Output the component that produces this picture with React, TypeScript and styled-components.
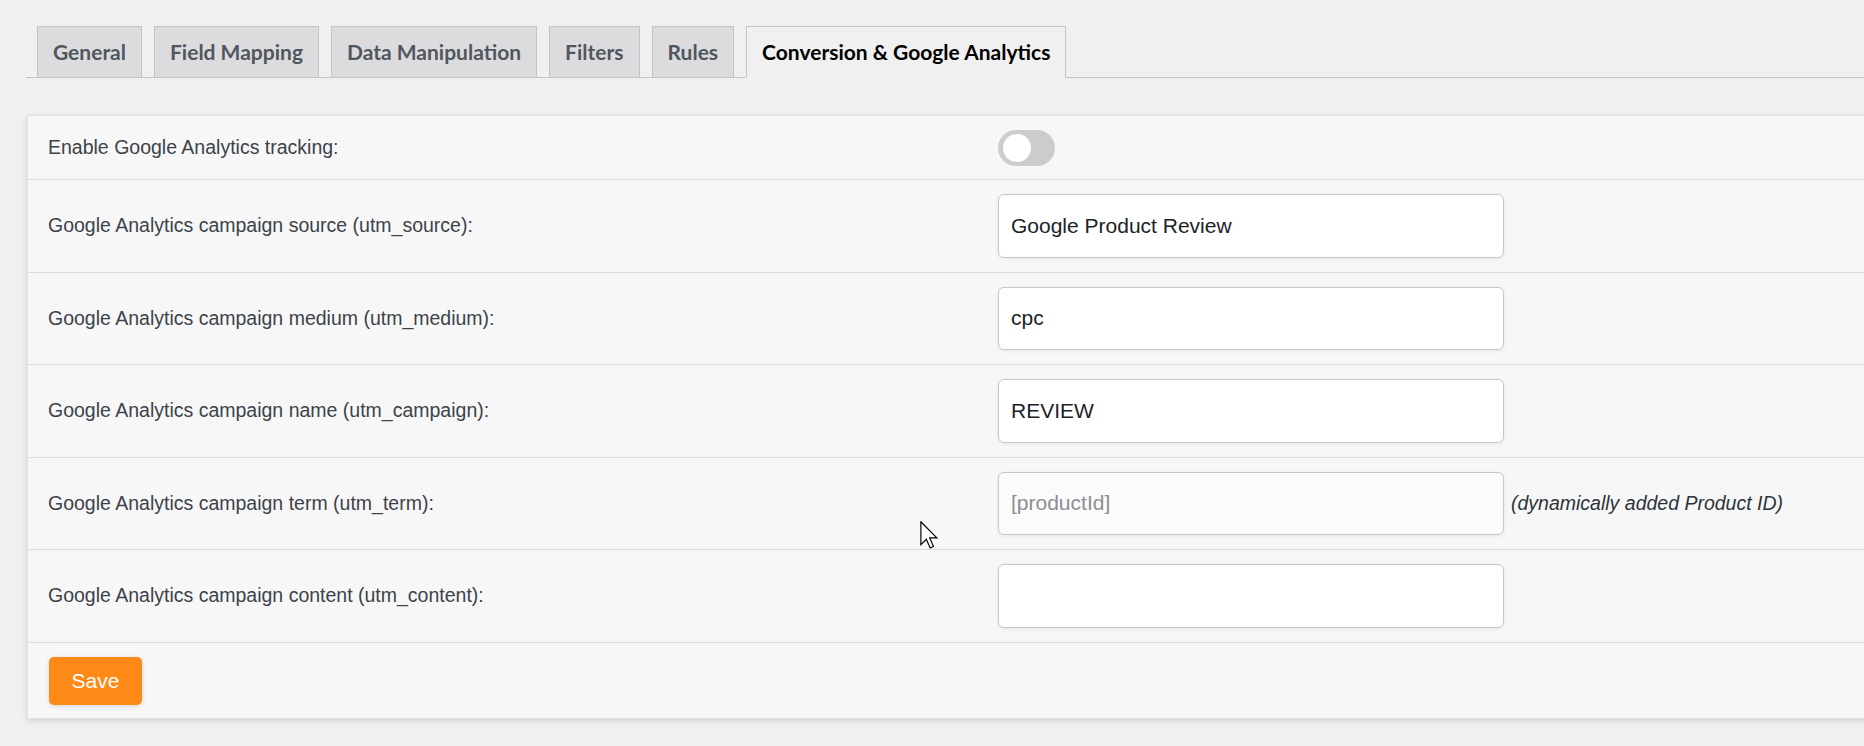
import React, { FC } from 'react'
import styled, { createGlobalStyle } from 'styled-components'

const GlobalStyle = createGlobalStyle`
  html, body {
    margin: 0;
    padding: 0;
    background: #f0f0f1;
    overflow: hidden;
  }
  body {
    font-family: 'Liberation Sans', Arial, sans-serif;
  }
`

const tabs = ['General', 'Field Mapping', 'Data Manipulation', 'Filters', 'Rules', 'Conversion & Google Analytics']

type Field = {
  label: string
  value?: string
  placeholder?: string
  disabled?: boolean
  hint?: string
}

const fields: Field[] = [
  { label: 'Google Analytics campaign source (utm_source):', value: 'Google Product Review' },
  { label: 'Google Analytics campaign medium (utm_medium):', value: 'cpc' },
  { label: 'Google Analytics campaign name (utm_campaign):', value: 'REVIEW' },
  {
    label: 'Google Analytics campaign term (utm_term):',
    placeholder: '[productId]',
    disabled: true,
    hint: '(dynamically added Product ID)',
  },
  { label: 'Google Analytics campaign content (utm_content):', value: '' },
]

const App: FC = () => {
  return (
    <Page>
      <GlobalStyle />
      <TabNav>
        {tabs.map((t, i) => (
          <Tab key={t} $active={i === tabs.length - 1}>
            {t}
          </Tab>
        ))}
      </TabNav>

      <Panel>
        <Row $compact>
          <Label>Enable Google Analytics tracking:</Label>
          <Cell>
            <Toggle>
              <Knob />
            </Toggle>
          </Cell>
        </Row>
        {fields.map((f) => (
          <Row key={f.label}>
            <Label>{f.label}</Label>
            <Cell>
              <Input
                type="text"
                defaultValue={f.value}
                placeholder={f.placeholder}
                disabled={f.disabled}
                readOnly
              />
              {f.hint && <Hint>{f.hint}</Hint>}
            </Cell>
          </Row>
        ))}
        <Footer>
          <SaveButton>Save</SaveButton>
        </Footer>
      </Panel>

      <Cursor width="18" height="28" viewBox="0 0 12 19">
        <path
          d="M0.5 0.5 L0.5 16 L4.2 12.4 L6.8 18.3 L9 17.3 L6.5 11.5 L11.3 11.5 Z"
          fill="#fff"
          stroke="#000"
          strokeWidth="0.8"
          strokeLinejoin="miter"
        />
      </Cursor>
    </Page>
  )
}

export default App

const Page = styled.div`
  position: relative;
  width: 1864px;
  height: 746px;
  padding-top: 26px;
  box-sizing: border-box;
`

const TabNav = styled.div`
  display: flex;
  align-items: flex-end;
  gap: 12px;
  margin-left: 26px;
  padding-left: 11px;
  border-bottom: 1px solid #c3c4c7;
`

const Tab = styled.div<{ $active?: boolean }>`
  font-family: Lato, 'Open Sans', sans-serif;
  font-weight: 700;
  font-size: 21px;
  line-height: 36px;
  padding: 7px 15px;
  margin-bottom: -1px;
  border: 1px solid #c3c4c7;
  background: ${(p) => (p.$active ? '#f0f0f1' : '#dcdcde')};
  border-bottom-color: ${(p) => (p.$active ? '#f0f0f1' : '#c3c4c7')};
  color: ${(p) => (p.$active ? '#000' : '#50575e')};
  white-space: nowrap;
`

const Panel = styled.div`
  margin: 37px 0 0 27px;
  width: 1900px;
  background: #f7f7f7;
  border: 1px solid #e2e2e2;
  box-shadow: 0 2px 6px rgba(0, 0, 0, 0.13);
`

const Row = styled.div<{ $compact?: boolean }>`
  display: grid;
  grid-template-columns: 970px 1fr;
  align-items: center;
  padding: ${(p) => (p.$compact ? '13.5px 0' : '14px 0')};
  min-height: ${(p) => (p.$compact ? '36px' : 'auto')};
  border-bottom: 1px solid #dcdcde;
`

const Label = styled.div`
  padding-left: 20px;
  font-size: 19.5px;
  color: #3c434a;
`

const Cell = styled.div`
  display: flex;
  align-items: center;
  gap: 7px;
`

const Toggle = styled.div`
  position: relative;
  width: 57px;
  height: 36px;
  border-radius: 18px;
  background: #cccccc;
`

const Knob = styled.span`
  position: absolute;
  top: 4px;
  left: 5px;
  width: 28px;
  height: 28px;
  border-radius: 50%;
  background: #fff;
`

const Input = styled.input`
  box-sizing: border-box;
  width: 506px;
  height: 63.5px;
  padding: 0 12px;
  border: 1px solid #c6c7c9;
  border-radius: 6px;
  background: #fff;
  box-shadow: 0 1px 4px rgba(0, 0, 0, 0.07);
  font-family: 'Liberation Sans', Arial, sans-serif;
  font-size: 21px;
  color: #1d2327;
  outline: none;

  &:disabled {
    background: #fbfbfb;
  }
  &::placeholder {
    color: #8c8f94;
  }
`

const Hint = styled.em`
  font-size: 19.5px;
  color: #2c3338;
`

const Footer = styled.div`
  padding: 14px 21px 13px;
`

const SaveButton = styled.button`
  width: 93px;
  height: 48px;
  border: none;
  border-radius: 5px;
  background: #fd8917;
  color: #fff;
  font-family: 'Liberation Sans', Arial, sans-serif;
  font-size: 21px;
  box-shadow: 0 1px 4px rgba(0, 0, 0, 0.15);
  cursor: pointer;
`

const Cursor = styled.svg`
  position: absolute;
  left: 920px;
  top: 521px;
  pointer-events: none;
`
